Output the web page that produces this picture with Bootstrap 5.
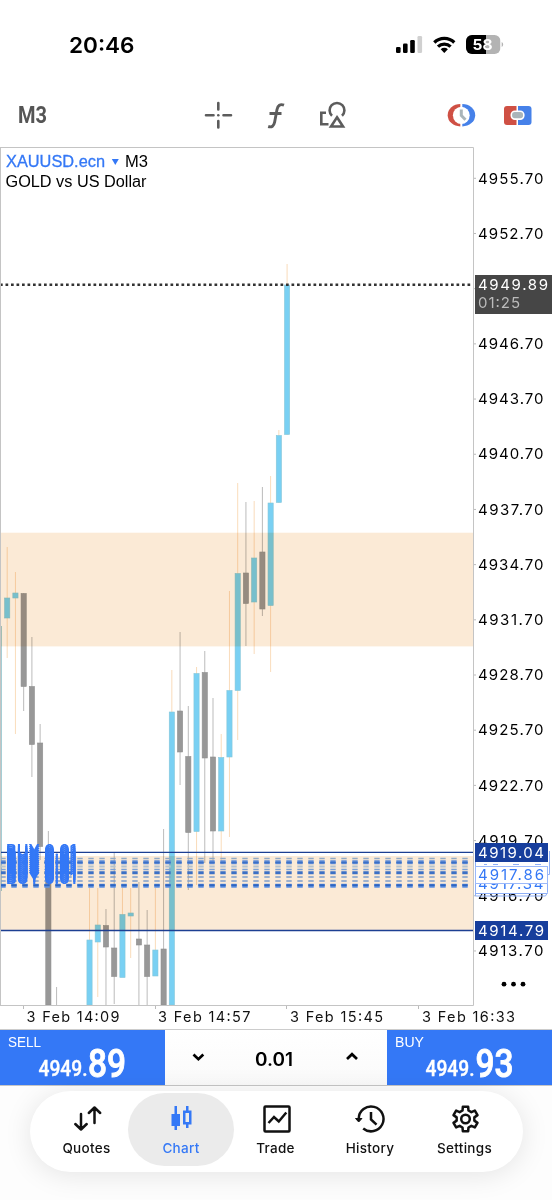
<!DOCTYPE html>
<html lang="en">
<head>
<meta charset="utf-8">
<meta name="viewport" content="width=device-width, initial-scale=1">
<title>XAUUSD.ecn M3</title>
<link href="https://cdn.jsdelivr.net/npm/bootstrap@5.3.0/dist/css/bootstrap.min.css" rel="stylesheet">
<style>
body{font-family:Inter,"Liberation Sans",sans-serif;background:#fff;color:#000;width:552px;height:1200px;overflow:hidden}
svg{display:block;flex:none}
.status{height:90px}
.tools{height:57px}
.chart{height:882px}
.order{height:57px;border-top:1px solid #ccc;border-bottom:1px solid #c6c6c6}
.side{width:165px;background:#3478f6}
.volume{background:linear-gradient(#fff,#fafafa)}
.foot{height:114px;background:#fdfdfd;padding:5px 29px 0 30px}
.tabs{height:81px;border-radius:41px;background:#fff;box-shadow:0 3px 28px rgba(0,0,0,.1);padding:2px 0 0 15px}
.tab-item{height:73px;font-size:13.500px;font-weight:500;letter-spacing:.3px;line-height:18px;padding-top:11px;color:#111;text-decoration:none;border-radius:37px;flex:none}
.tab-item svg{margin-bottom:5px}
.tab-item.current{background:#ebebeb;color:#3478f6}
.w-narrow{width:83px}
.w-wide{width:106px}
.axis{font-family:Inter,sans-serif;font-size:15px}
.title-text{font-family:"Liberation Sans",sans-serif;font-size:16px}
.din{font-family:Roboto,sans-serif;font-weight:500}
.positions{left:6px;top:694.500px;font-size:16px;line-height:16px;font-weight:600;color:#3478f6;white-space:pre;letter-spacing:.1px;
text-shadow:0 2px,0 4px,0 6px,0 8px,0 10px,0 12px,0 14px,0 16px,0 18px,0 20px,0 22px,0 24px,0 26px,0 27.500px}
</style>
</head>
<body class="d-flex flex-column">
<header class="status flex-shrink-0">
<svg width="552" height="90" viewBox="0 0 552 90">
<text x="69" y="53" font-size="22" font-weight="600" textLength="65.500" lengthAdjust="spacingAndGlyphs">20:46</text>
<rect x="396" y="47" width="4.600" height="6" rx="1.300"/><rect x="403" y="43.500" width="4.600" height="9.500" rx="1.300"/><rect x="410.200" y="40" width="4.600" height="13" rx="1.300"/><rect x="417.500" y="36" width="4.600" height="17" rx="1.300" fill="#d0d0d0"/>
<g fill="none" stroke="#000" stroke-width="3.200"><path d="M434.300 42.500a14.100 14.100 0 0 1 20 0"/><path d="M438 46.700a8.900 8.900 0 0 1 12.600 0"/></g><path d="M444.300 53l-3.600-3.700a5.200 5.200 0 0 1 7.200 0z"/>
<clipPath id="cell"><rect x="466" y="35" width="34.500" height="19" rx="6"/></clipPath>
<g clip-path="url(#cell)"><rect x="466" y="35" width="34.500" height="19" fill="#b3b3b3"/><rect x="466" y="35" width="20" height="19"/></g>
<path d="M501.700 42v5c2-1 2-4 0-5" fill="#b3b3b3"/>
<text x="472.500" y="50" font-size="15" font-weight="700" fill="#fff" textLength="20" lengthAdjust="spacingAndGlyphs">58</text>
</svg>
</header>
<nav class="tools flex-shrink-0" aria-label="Chart tools">
<svg width="552" height="57" viewBox="0 90 552 57">
<text class="din" x="18" y="123" font-size="23" style="font-weight:700" fill="#555" textLength="29" lengthAdjust="spacingAndGlyphs">M3</text>
<g fill="none" stroke="#5c5c5c" stroke-width="2.600" stroke-linecap="round"><path d="M218.300 103v6.500M218.300 121v6.500M206 115.300h7.500M223.500 115.300h7.500"/></g><circle cx="218.300" cy="115.300" r="1.300" fill="#5c5c5c"/>
<path d="M284 105.200c-3.800-1.500-6.200.3-7 4.300l-2.400 12.800c-.7 3.600-2.800 5.400-6.400 4.200M269.500 113.500h12" fill="none" stroke="#5c5c5c" stroke-width="2.900"/>
<g fill="none" stroke="#5c5c5c" stroke-width="2.600"><path d="M332 115.800A7.400 7.400 0 1 1 342 115.800"/><path d="M326 112.800H321.300V124.200H328.500"/><path d="M337 117.300l6 9.200h-12z"/></g>
<path d="M460.300 104A12.600 11.200 0 0 0 460.300 126.400Z" fill="#cf5044"/><path d="M462.300 104A12.900 11.200 0 0 1 462.300 126.400Z" fill="#4681e9"/>
<ellipse cx="461.300" cy="115.300" rx="8.400" ry="8.600" fill="#fff"/><path d="M461.300 109.500v6l4.200 4.300" stroke="#aab5b9" stroke-width="3" fill="none"/>
<path d="M516.500 106H507q-3 0-3 3v13q0 3 3 3h9.500z" fill="#cf5044"/><path d="M518 106h10.500q3 0 3 3v13q0 3-3 3H518z" fill="#4681e9"/><rect x="511.300" y="111.300" width="12.500" height="7.800" rx="3.500" fill="#aab5b9" stroke="#fff" stroke-width="1.600"/>
</svg>
</nav>
<main class="chart flex-shrink-0 position-relative">
<svg id="plot" width="552" height="882" viewBox="0 147 552 882">
<defs><clipPath id="pane"><rect x="0" y="147" width="473" height="858"/></clipPath></defs>
<g id="candles" clip-path="url(#pane)"></g>
<g style="mix-blend-mode:multiply" fill="#fbead6"><rect x="0" y="532.700" width="473" height="113.700"/><rect x="0" y="856" width="473" height="74"/></g>
<path d="M0 284.800H473" stroke="#333" stroke-width="2.500" stroke-dasharray="2.700 2.800"/>
<g id="orders" stroke-dasharray="5.400 5.600" stroke-dashoffset="-.3"></g>
<path d="M0 852.400H473M0 930.500H473" stroke="#1c3f92" stroke-width="1.400"/>
<path d="M0 147.500H473.500V1005.500H0M.5 147V1005" fill="none" stroke="#c4c4c4"/>
<g class="title-text"><text x="6" y="166.500" fill="#3478f6" stroke="#3478f6" stroke-width=".3" textLength="99" lengthAdjust="spacingAndGlyphs">XAUUSD.ecn</text><path d="M111.800 159h7l-3.500 6z" fill="#3478f6"/><text x="125" y="166.500" textLength="23" lengthAdjust="spacingAndGlyphs">M3</text><text x="5.500" y="186.500" textLength="141" lengthAdjust="spacingAndGlyphs">GOLD vs US Dollar</text></g>
<g id="prices" class="axis"></g>
<g class="axis">
<rect x="475" y="275" width="77" height="39" fill="#464646"/><text x="478" y="290.300" fill="#fff" textLength="70">4949.89</text><text x="478" y="308.300" fill="#bbb" textLength="42">01:25</text>
<rect x="475.500" y="855" width="73" height="38" fill="#fff"/><path d="M549.500 851v23.500h-3M475.500 896H545.500l2-3.500V882M475.500 893.500h72M475.500 862v34" fill="none" stroke="#8eaff7"/>
<text x="478" y="889" fill="#3478f6" textLength="65.500">4917.34</text>
<path d="M484 864.500h3M493 864.500h5M513 864.500h6M535 864.500h6" stroke="#8eaff7"/>
<rect x="475.500" y="866.500" width="72" height="17" fill="#fff" stroke="#9bb9fa"/><text x="478" y="880" fill="#3478f6" textLength="66">4917.86</text>
<rect x="475" y="843" width="73" height="19" fill="#173e9c"/><text x="478" y="858" fill="#fff" textLength="66">4919.04</text>
<rect x="475" y="921" width="73" height="19" fill="#173e9c"/><text x="478" y="936" fill="#fff" textLength="66">4914.79</text>
</g>
<circle cx="504" cy="984.200" r="2.400"/><circle cx="513.500" cy="984.200" r="2.400"/><circle cx="523" cy="984.200" r="2.400"/>
<path d="M23.500 1006v3M155.500 1006v3M286.500 1006v3M418.500 1006v3" stroke="#bbb"/>
<g font-size="14.500" fill="#111"><text x="26.500" y="1022" textLength="93">3 Feb 14:09</text><text x="158" y="1022" textLength="92.500">3 Feb 14:57</text><text x="290" y="1022" textLength="93">3 Feb 15:45</text><text x="422" y="1022" textLength="93">3 Feb 16:33</text></g>
</svg>
<span class="positions position-absolute">BUY 0.01</span>
</main>
<section class="order d-flex flex-shrink-0">
<div class="side"><svg width="165" height="55" viewBox="0 1030 165 55" fill="#fff"><text x="8" y="1047" font-family="Liberation Sans" font-size="14" textLength="33" lengthAdjust="spacingAndGlyphs">SELL</text><text class="din" x="38.500" y="1076.300" font-size="22" stroke="#fff" stroke-width=".4" textLength="49" lengthAdjust="spacingAndGlyphs">4949.</text><text class="din" x="88" y="1076.500" font-size="39" stroke="#fff" stroke-width=".9" textLength="38" lengthAdjust="spacingAndGlyphs">89</text></svg></div>
<div class="volume flex-fill d-flex"><svg width="222" height="55" viewBox="165 1030 222 55"><path d="M193.500 1054.500l4.900 4.700 4.900-4.700M347 1059l5-4.800 5 4.800" fill="none" stroke="#000" stroke-width="2.700"/><text x="255" y="1065.500" font-size="18.500" font-weight="600" textLength="38" lengthAdjust="spacingAndGlyphs">0.01</text></svg></div>
<div class="side"><svg width="165" height="55" viewBox="387 1030 165 55" fill="#fff"><text x="395" y="1047" font-family="Liberation Sans" font-size="14" textLength="29" lengthAdjust="spacingAndGlyphs">BUY</text><text class="din" x="425.500" y="1076.300" font-size="22" stroke="#fff" stroke-width=".4" textLength="49" lengthAdjust="spacingAndGlyphs">4949.</text><text class="din" x="475.500" y="1076.500" font-size="39" stroke="#fff" stroke-width=".9" textLength="38" lengthAdjust="spacingAndGlyphs">93</text></svg></div>
</section>
<footer class="foot flex-shrink-0">
<nav class="tabs d-flex">
<a class="tab-item w-narrow me-px d-flex flex-column align-items-center" href="#"><svg width="30" height="30" viewBox="0 0 30 30" fill="none" stroke="currentColor" stroke-width="2.500" stroke-linecap="round" stroke-linejoin="round"><path d="M9 10v15.500M3.300 20l5.700 5.500 5.700-5.500M22.500 19V3.500M16.800 9l5.700-5.500L28.200 9"/></svg>Quotes</a>
<a class="tab-item w-wide current d-flex flex-column align-items-center" href="#"><svg width="30" height="30" viewBox="0 0 30 30" fill="currentColor"><path d="M8.500 2H11v8h3v12h-3v4H8.500v-4h-3V10h3zM20 2h2.500v4.500h3v14h-3V24H20v-3.500h-3v-14h3zM19.500 9v9h3.500V9z" fill-rule="evenodd"/></svg>Chart</a>
<a class="tab-item w-narrow d-flex flex-column align-items-center" href="#"><svg width="30" height="30" viewBox="0 0 30 30" fill="none" stroke="currentColor" stroke-width="2.500"><rect x="3.500" y="2.500" width="25" height="25" rx="1"/><path d="M7.500 19l5.500-6 4.800 4.500 7.500-9"/></svg>Trade</a>
<a class="tab-item w-wide d-flex flex-column align-items-center" href="#"><svg width="32" height="30" viewBox="0 0 32 30" fill="none" stroke="currentColor" stroke-width="2.500"><path d="M4.700 14.700A12.400 12.400 0 1 1 9.200 24.500M17 8v7.500l5.500 5.200"/><path d="M1.500 14.500h6.400L4.700 18z" fill="currentColor" stroke-width="1"/></svg>History</a>
<a class="tab-item w-narrow d-flex flex-column align-items-center" href="#"><svg width="30" height="30" viewBox="0 0 30 30" fill="none" stroke="currentColor" stroke-width="2.500" stroke-linejoin="round"><path id="gear"/><circle cx="15.500" cy="15" r="4.300"/></svg>Settings</a>
</nav>
</footer>
<script src="https://cdn.jsdelivr.net/npm/bootstrap@5.3.0/dist/js/bootstrap.bundle.min.js"></script>
<script>
// slot, direction, body top, body bottom, wick top, wick bottom
const bars=[[0,1,598,618,547,658],[1,1,593,598,572,734],[2,0,593.5,686.5,593,711],[3,0,686.5,744.5,637,777],[4,0,743,846.5,724,860],[5,0,848,1005,831,1005],[6,0,1005,1005,987,1005],[10,1,940,1005,888,1005],[11,1,925,942,888,997],[12,0,925.5,947,909,1005],[13,0,948,976.5,853,1004],[14,1,914.5,977.5,888,977],[15,1,913,916,888,958],[16,0,939,945,882,1005],[17,0,945,976.5,910,1005],[18,1,950,976,888,976],[19,0,949,1005,829,1005],[20,1,712,1005,670,1005],[21,0,711,752,632,785],[22,0,756.5,832.5,706,890],[23,1,673.5,831.5,667,885],[24,0,672.5,758,651,863],[25,0,757,831,698,863],[26,1,757.5,831,734,863],[27,1,690.5,757,591,837],[28,1,573.5,690.5,483,740],[29,0,573,603.5,502,646],[30,1,558,602,501,654],[31,0,552,609,487,616],[32,1,503,605.5,476,672],[33,1,435.5,502.5,430,503],[34,1,285,434.5,264,435]];
let out='<rect x="0" y="626" width="1.8" height="265" fill="#8fc3cb"/>';
for(const [i,up,t,b,wt,wb] of bars){
  const x=7.2+i*8.232;
  out+=`<path d="M${x} ${wt}V${wb}" stroke="${up?'#f8d3a9':'#aaa'}" stroke-width=".8"/>`;
  if(b>t) out+=`<rect x="${x-2.6}" y="${t}" width="5.2" height="${b-t}" fill="${up?'#79d0f3':'#989898'}" stroke="${up?'#85c6d8':'#909090'}" stroke-width=".6"/>`;
}
document.getElementById('candles').innerHTML=out;
const levels=[[858.5,1.6,'#8fa9c8'],[862.3,4,'#5f8dd8'],[862.5,1.6,'#3c70c5'],[866.5,2,'#b4c2ce'],[869.5,1.4,'#7ea2d6'],[872.7,3,'#3c70c5'],[877,1.6,'#7f9fcb'],[881,1.6,'#7f9fcb'],[885.7,4,'#5f93e5'],[885.2,2,'#2f65c0']];
document.getElementById('orders').innerHTML=levels.map(([y,w,c])=>`<path d="M0 ${y}H473" stroke="${c}" stroke-width="${w}"/>`).join('');
let labels='';
for(let k=0;k<15;k++){
  const y=178.3+k*55.19;
  labels+=`<path d="M474 ${y}h2" stroke="#bbb"/>`;
  if(k!==2) labels+=`<text x="478" y="${y+5.2}" textLength="65.5">${(4955.7-3*k).toFixed(2)}</text>`;
}
document.getElementById('prices').innerHTML=labels;
// six-toothed outline
let d='';
for(let k=0;k<6;k++){
  for(const [o,r] of [[-.34,9],[-.21,12.6],[.21,12.6],[.34,9]]){
    const a=k*Math.PI/3-Math.PI/2+o;
    d+=(d?'L':'M')+(15.5+r*Math.cos(a)).toFixed(2)+' '+(15+r*Math.sin(a)).toFixed(2);
  }
}
document.getElementById('gear').setAttribute('d',d+'Z');
</script>
</body>
</html>
